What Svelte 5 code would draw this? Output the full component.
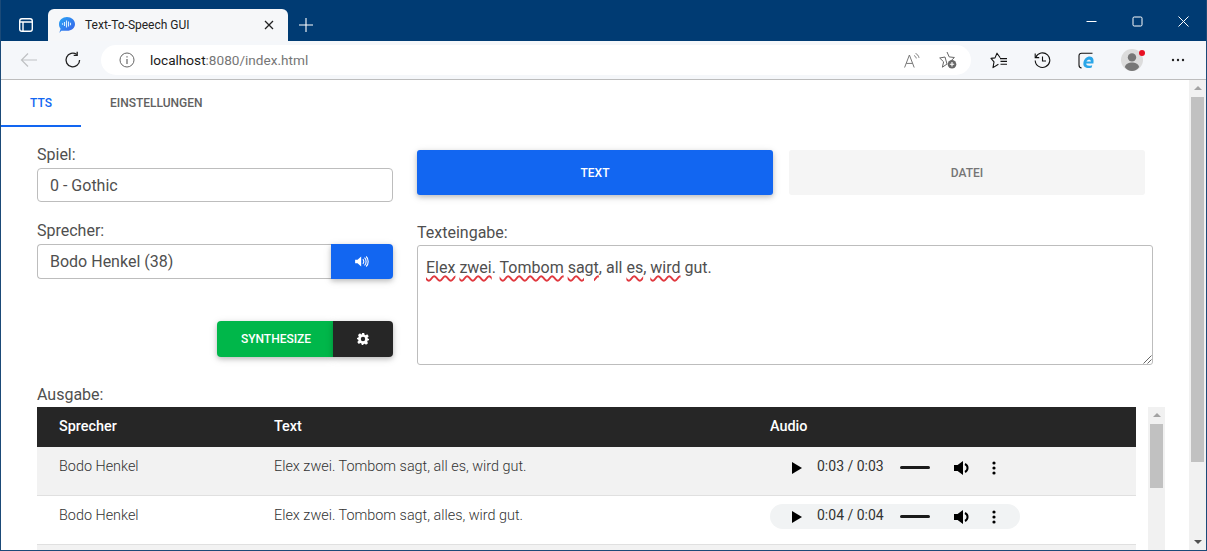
<script>
  // Browserfenster mit der TTS-Oberfläche
  const rows = [
    { who: "Bodo Henkel", text: "Elex zwei. Tombom sagt, all es, wird gut.", time: "0:03 / 0:03", hover: false },
    { who: "Bodo Henkel", text: "Elex zwei. Tombom sagt, alles, wird gut.", time: "0:04 / 0:04", hover: true },
  ];
</script>

<div class="window">
  <header class="titlebar">
    <div class="tabstrip-btn">
      <svg width="16" height="16" viewBox="0 0 16 16" fill="none" stroke="#fff" stroke-width="1.4"><rect x="1.7" y="1.7" width="12.6" height="12.6" rx="2.2"/><path d="M1.7 5H14.3M5 5V14.3"/></svg>
    </div>
    <div class="tab">
      <svg class="favicon" width="16" height="16" viewBox="0 0 16 16">
        <defs><linearGradient id="bubble" x1="0" y1="0" x2="1" y2="1"><stop offset="0" stop-color="#29a4f5"/><stop offset="1" stop-color="#3a5fe8"/></linearGradient></defs>
        <path d="M8 0C12.4 0 16 3 16 6.9S12.4 13.8 8 13.8H2.4C1.6 14.4 1 15.2 0.6 15.9 0.6 14.3 1.2 13 1.6 11.7 0.6 10.5 0 8.8 0 6.9 0 3 3.6 0 8 0Z" fill="url(#bubble)"/>
        <path d="M3.5 6.2V7.8M5.5 5V9M7.5 3.6V10.4M9.5 4.6V9.4M11.5 5.8V8.2" stroke="#d7ecff" stroke-width="1.1" fill="none"/>
      </svg>
      <span class="tab-title">Text-To-Speech GUI</span>
      <svg class="tab-x" width="10" height="10" viewBox="0 0 10 10" stroke="#222" stroke-width="1.3"><path d="M1 1L9 9M9 1L1 9"/></svg>
    </div>
    <svg class="plus" width="16" height="16" viewBox="0 0 16 16" stroke="#fff" stroke-width="1.1"><path d="M8 1V15M1 8H15"/></svg>
    <div class="winctl">
      <svg width="11" height="11" viewBox="0 0 11 11" stroke="#fff" stroke-width="1"><path d="M0.5 5.5H10.5"/></svg>
      <svg width="11" height="11" viewBox="0 0 11 11" stroke="#fff" fill="none" stroke-width="1"><rect x="1" y="1" width="9" height="9" rx="1.2"/></svg>
      <svg width="11" height="11" viewBox="0 0 11 11" stroke="#fff" stroke-width="1"><path d="M0.5 0.5L10.5 10.5M10.5 0.5L0.5 10.5"/></svg>
    </div>
  </header>

  <nav class="toolbar">
    <svg class="back" width="18" height="16" viewBox="0 0 18 16" fill="none" stroke="#bfc1c3" stroke-width="1.2"><path d="M17 8H1.5M8 1.5L1.5 8L8 14.5"/></svg>
    <svg class="reload" width="18" height="18" viewBox="0 0 18 18" fill="none" stroke="#222" stroke-width="1.3"><path d="M15.6 9A6.8 6.8 0 1 1 12.8 3.5"/><path d="M13.2 0.8V4.3H9.7"/></svg>
    <div class="omnibox">
      <svg width="16" height="16" viewBox="0 0 16 16" fill="none" stroke="#666" stroke-width="1"><circle cx="8" cy="8" r="7"/><path d="M8 7V12M8 4.2V5.6" stroke-width="1.2"/></svg>
      <span class="url"><span class="host">localhost</span>:8080/index.html</span>
      <span class="omni-icons">
        <svg width="16" height="15" viewBox="0 0 16 15" fill="none" stroke="#777" stroke-width="1"><path d="M0.6 14.5L5.4 2L10.2 14.5M2.2 10.4H8.6"/><path d="M10 2.6C11.2 3 12 4 12.3 5.4M11.6 0.6C13.4 1.2 14.6 2.8 15 4.8"/></svg>
        <svg width="18" height="18" viewBox="0 0 18 18" fill="none" stroke="#666" stroke-width="1"><path d="M8 1L10.2 5.9L15.4 6.5L11.8 10M8 13L3.4 16.2L4.6 10.8L0.7 7L6 6Z" stroke-linejoin="round"/><circle cx="13" cy="13.2" r="4.3" fill="#666" stroke="none"/><path d="M13 11V15.4M10.8 13.2H15.2" stroke="#fff" stroke-width="1.1"/></svg>
      </span>
    </div>
    <div class="tools">
      <svg class="t1" width="18" height="17" viewBox="0 0 18 17" fill="none" stroke="#111" stroke-width="1.1"><path d="M10.2 5.7L7 1.2L5 5.9L1 6.4L4 9.8L3 15.6L8.4 12.2" stroke-linejoin="round"/><path d="M10 6.6H17M10.5 9.4H17M10.5 12.2H17"/></svg>
      <svg class="t2" width="17" height="17" viewBox="0 0 17 17" fill="none" stroke="#111" stroke-width="1.1"><path d="M1.7 5.5A7.3 7.3 0 1 1 1.2 8.5"/><path d="M1.2 1.6V5.6H5.2M8.5 4.5V9H12"/></svg>
      <svg class="t3" width="17" height="17" viewBox="0 0 17 17" fill="none"><path d="M14.5 1.2H3.5A2.5 2.5 0 0 0 1 3.7V13A3 3 0 0 0 3.6 16" stroke="#111" stroke-width="1.1"/><path d="M15.4 11.6H8.2C8.2 13.9 11 14.4 14.2 13.2L13.7 15.4C9.5 16.8 4.8 15.6 5.4 10.9 5.9 7.2 8.6 4.6 11.8 4.6 15 4.6 16.2 7.6 15.4 11.6ZM8.5 9.6H12.9C13 7.2 9.4 7.2 8.5 9.6Z" fill="#2aa6e8"/></svg>
      <span class="avatar">
        <svg width="22" height="22" viewBox="0 0 22 22"><circle cx="11" cy="11" r="11" fill="#dcdcdc"/><circle cx="11" cy="8.4" r="4.2" fill="#777"/><path d="M3.8 18C5 14.6 8 13.6 11 13.6S17 14.6 18.2 18C16.4 20.6 13.8 22 11 22S5.6 20.6 3.8 18Z" fill="#777"/></svg>
        <i class="dot"></i>
      </span>
      <svg class="t4" width="14" height="4" viewBox="0 0 14 4" fill="#222"><circle cx="2" cy="2" r="1.2"/><circle cx="7" cy="2" r="1.2"/><circle cx="12" cy="2" r="1.2"/></svg>
    </div>
  </nav>

  <div class="viewport">
    <main class="page">
      <div class="tabs">
        <div class="tabitem active">TTS</div>
        <div class="tabitem">Einstellungen</div>
      </div>

      <section class="form">
        <div class="left">
          <label class="lbl" for="spiel">Spiel:</label>
          <div class="field" id="spiel">0 - Gothic</div>

          <label class="lbl second" for="sprecher">Sprecher:</label>
          <div class="joined">
            <div class="field grow" id="sprecher">Bodo Henkel (38)</div>
            <button class="btn speak" aria-label="Anhören">
              <svg width="14" height="11" viewBox="0 0 15 12" fill="#fff"><path d="M0 4H2.6L6.6 0.6V11.4L2.6 8H0Z"/><path d="M8.4 3.5C9.8 4.6 9.8 7.4 8.4 8.5M10.2 1.8C12.6 3.6 12.6 8.4 10.2 10.2M12 0.5C15 3 15 9 12 11.5" stroke="#fff" stroke-width="1.2" fill="none"/></svg>
            </button>
          </div>

          <div class="actions">
            <button class="btn synth">Synthesize</button>
            <button class="btn gear" aria-label="Einstellungen">
              <svg width="12" height="12" viewBox="0 0 24 24" fill="#fff"><path fill-rule="evenodd" d="M9.6 0H14.4L15.2 3.4 17.4 4.3 20.4 2.5 23.5 6.6 21 9 21.5 11 24 12.2V14.4L21.3 15.2 20.5 17.4 22 20.4 18 23.5 15.6 21.4 13.6 22 12 24H9.6L8.8 21 6.6 20.1 3.6 21.9 0.5 17.8 3 15.4 2.5 13.4 0 12.2V9.8L2.7 9 3.5 6.8 2 3.8 6 0.7 8.4 2.8 10.4 2.2ZM12 7.6A4.4 4.4 0 1 0 12 16.4 4.4 4.4 0 1 0 12 7.6Z"/></svg>
            </button>
          </div>
        </div>

        <div class="right">
          <div class="modes">
            <button class="btn mode on">Text</button>
            <button class="btn mode">Datei</button>
          </div>
          <label class="lbl" for="eingabe">Texteingabe:</label>
          <div class="textarea" id="eingabe">
            <span class="typo">Elex</span> <span class="typo">zwei</span>. <span class="typo">Tombom</span> <span class="typo">sagt</span>, all <span class="typo">es</span>, <span class="typo">wird</span> gut.
            <svg class="grip" width="10" height="10" viewBox="0 0 10 10" stroke="#666" stroke-width="1"><path d="M9.5 1.5L1.5 9.5M9.5 5.5L5.5 9.5"/></svg>
          </div>
        </div>
      </section>

      <div class="output">
        <div class="lbl">Ausgabe:</div>
        <div class="table-wrap">
          <div class="table">
            <div class="row head">
              <div class="c1">Sprecher</div>
              <div class="c2">Text</div>
              <div class="c3">Audio</div>
            </div>
            {#each rows as r, i}
              <div class="row" class:odd={i === 0}>
                <div class="c1">{r.who}</div>
                <div class="c2">{r.text}</div>
                <div class="c3">
                  <div class="player" class:tinted={r.hover}>
                    <svg class="play" width="10" height="12" viewBox="0 0 10 12"><path d="M0 0L10 6L0 12Z" fill="#000"/></svg>
                    <span class="time">{r.time}</span>
                    <i class="track"></i>
                    <svg class="vol" width="16" height="14" viewBox="0 0 16 14"><path d="M0 4H3.6L9 0V14L3.6 10H0Z" fill="#000"/><path d="M11 3C14.4 4.8 14.4 9.2 11 11" stroke="#000" stroke-width="2" fill="none"/></svg>
                    <svg class="more" width="4" height="14" viewBox="0 0 4 14" fill="#000"><circle cx="2" cy="2" r="1.6"/><circle cx="2" cy="7" r="1.6"/><circle cx="2" cy="12" r="1.6"/></svg>
                  </div>
                </div>
              </div>
            {/each}
            <div class="row odd stub"></div>
          </div>
          <div class="scrollbar inner">
            <i class="arrow up"></i>
            <i class="thumb"></i>
          </div>
        </div>
      </div>
    </main>
    <div class="scrollbar outer">
      <i class="arrow up"></i>
      <i class="thumb"></i>
      <i class="arrow down"></i>
    </div>
  </div>
</div>

<style>
  :global(body) {
    margin: 0;
    overflow: hidden;
  }
  .window {
    width: 1207px;
    height: 551px;
    box-sizing: border-box;
    display: flex;
    flex-direction: column;
    border: 1px solid #1b4a78;
    border-top: 0;
    font-family: Roboto, "Liberation Sans", sans-serif;
    color: #4f4f4f;
    overflow: hidden;
    background: #fff;
  }
  .titlebar {
    flex: 0 0 41px;
    display: flex;
    align-items: flex-end;
    background: #003b73;
    color: #fff;
  }
  .tabstrip-btn {
    width: 47px;
    height: 32px;
    display: flex;
    align-items: center;
    justify-content: center;
    box-sizing: border-box;
    padding-left: 2px;
  }
  .tab {
    width: 240px;
    height: 32px;
    background: #f6f7f9;
    border-radius: 6px 6px 0 0;
    display: flex;
    align-items: center;
    padding: 0 11px;
    box-sizing: border-box;
    gap: 10px;
  }
  .favicon {
    flex: none;
  }
  .tab-title {
    flex: 1;
    font-size: 12px;
    color: #222;
  }
  .tab-x {
    margin-right: 3px;
  }
  .plus {
    margin: 0 0 8px 10px;
  }
  .winctl {
    margin-left: auto;
    display: flex;
    gap: 35px;
    padding-right: 17px;
    align-self: center;
    margin-top: 1px;
  }
  .toolbar {
    flex: 0 0 39px;
    box-sizing: border-box;
    background: #f5f7fa;
    border-bottom: 1px solid #bdbdbd;
    display: flex;
    align-items: center;
  }
  .back {
    margin-left: 19px;
  }
  .reload {
    margin-left: 26px;
  }
  .omnibox {
    margin-left: 19px;
    width: 870px;
    height: 30px;
    border-radius: 15px;
    background: #fff;
    display: flex;
    align-items: center;
    padding: 0 14px 0 18px;
    box-sizing: border-box;
    gap: 15px;
  }
  .url {
    font-size: 13.6px;
    color: #767676;
  }
  .host {
    color: #1a1a1a;
  }
  .omni-icons {
    margin-left: auto;
    display: flex;
    align-items: center;
    gap: 19px;
  }
  .tools {
    display: flex;
    align-items: center;
    margin-left: 19px;
  }
  .t2 {
    margin-left: 26px;
  }
  .t3 {
    margin-left: 27px;
  }
  .avatar {
    position: relative;
    margin-left: 26px;
    width: 22px;
    height: 22px;
  }
  .dot {
    position: absolute;
    right: -2px;
    top: 1px;
    width: 6px;
    height: 6px;
    border-radius: 50%;
    background: #e81123;
  }
  .t4 {
    margin-left: 28px;
  }
  .viewport {
    flex: 1;
    min-height: 0;
    display: flex;
  }
  .page {
    flex: 1;
    min-width: 0;
    overflow: hidden;
  }
  .tabs {
    display: flex;
    height: 47px;
  }
  .tabitem {
    padding: 0 29px;
    font-size: 12px;
    font-weight: 500;
    line-height: 46px;
    text-transform: uppercase;
    color: #616161;
    box-sizing: border-box;
  }
  .tabitem.active {
    width: 80px;
    text-align: center;
    padding: 0;
    color: #1266f1;
    border-bottom: 2px solid #1266f1;
  }
  .form {
    display: flex;
    gap: 24px;
    padding: 23px 0 0 36px;
  }
  .left {
    width: 356px;
    display: flex;
    flex-direction: column;
    margin-top: -5px;
  }
  .lbl {
    display: block;
    font-size: 16px;
    line-height: 19px;
    color: #4f4f4f;
    margin-bottom: 4px;
  }
  .second {
    margin-top: 19px;
  }
  .field {
    height: 34px;
    box-sizing: border-box;
    border: 1px solid #bdbdbd;
    border-radius: 4px;
    padding: 0 12px;
    font-size: 16px;
    line-height: 33px;
    color: #4f4f4f;
  }
  .joined {
    display: flex;
  }
  .grow {
    flex: 1;
    height: 35px;
    line-height: 33px;
    border-radius: 4px 0 0 4px;
    border-right: 0;
  }
  .btn {
    border: 0;
    padding: 0;
    font-family: inherit;
    font-size: 12px;
    font-weight: 500;
    text-transform: uppercase;
    cursor: pointer;
    display: flex;
    align-items: center;
    justify-content: center;
    box-shadow: 0 2px 5px rgba(0, 0, 0, 0.2), 0 2px 10px rgba(0, 0, 0, 0.1);
  }
  .speak {
    width: 62px;
    height: 35px;
    background: #1266f1;
    border-radius: 0 4px 4px 0;
  }
  .actions {
    display: flex;
    justify-content: flex-end;
    margin-top: 42px;
  }
  .synth {
    width: 116px;
    height: 36px;
    padding-left: 2px;
    background: #00b74a;
    color: #fff;
    border-radius: 4px 0 0 4px;
  }
  .gear {
    width: 60px;
    height: 36px;
    background: #262626;
    border-radius: 0 4px 4px 0;
  }
  .right {
    width: 736px;
    display: flex;
    flex-direction: column;
  }
  .right .lbl {
    margin-bottom: 3px;
  }
  .modes {
    display: flex;
    gap: 16px;
    width: 728px;
    margin-bottom: 28px;
  }
  .mode {
    flex: 1;
    height: 45px;
    background: #f5f5f5;
    color: #757575;
    border-radius: 3px;
    box-shadow: none;
  }
  .mode.on {
    background: #1266f1;
    color: #fff;
    box-shadow: 0 2px 5px rgba(0, 0, 0, 0.2), 0 2px 10px rgba(0, 0, 0, 0.1);
  }
  .textarea {
    position: relative;
    height: 120px;
    box-sizing: border-box;
    border: 1px solid #bdbdbd;
    border-radius: 3px;
    padding: 12px 8px;
    font-size: 16px;
    line-height: 20px;
    color: #4f4f4f;
  }
  .typo {
    text-decoration: underline wavy #e0383e 1.7px;
    text-underline-offset: 2px;
  }
  .grip {
    position: absolute;
    right: 0;
    bottom: 0;
  }
  .output {
    padding: 20px 0 0 36px;
  }
  .output .lbl {
    margin-bottom: 3px;
  }
  .table-wrap {
    display: flex;
    gap: 12px;
  }
  .table {
    width: 1099px;
    flex: none;
  }
  .row {
    display: flex;
    height: 49px;
    box-sizing: border-box;
    padding-top: 11px;
    border-bottom: 1px solid #e0e0e0;
    font-size: 14.4px;
    font-weight: 300;
    line-height: 17px;
    color: #333;
  }
  .row.odd {
    background: #f2f2f2;
  }
  .head {
    height: 40px;
    background: #262626;
    color: #fff;
    font-weight: 500;
    border-bottom: 0;
    align-items: center;
    padding: 0 0 1px;
  }
  .stub {
    height: 20px;
    border: 0;
    padding: 0;
  }
  .c1 {
    width: 214px;
    padding-left: 22px;
    box-sizing: border-box;
  }
  .c2 {
    width: 496px;
    padding-left: 23px;
    box-sizing: border-box;
  }
  .c3 {
    flex: 1;
    padding-left: 23px;
    box-sizing: border-box;
  }
  .row:not(.head) .c3 {
    margin-top: -3px;
  }
  .player {
    width: 250px;
    height: 25px;
    border-radius: 13px;
    display: flex;
    align-items: center;
    box-sizing: border-box;
    padding-left: 22px;
    color: #333;
    font-weight: 400;
  }
  .player.tinted {
    background: #f1f3f4;
  }
  .time {
    margin-left: 15px;
    font-size: 14px;
    position: relative;
    top: -1px;
  }
  .track {
    width: 30px;
    height: 3px;
    border-radius: 2px;
    background: #1a1a1a;
    margin-left: 16px;
  }
  .vol {
    margin-left: 24px;
  }
  .more {
    margin-left: 22px;
  }
  .scrollbar {
    flex: none;
    width: 17px;
    background: #f1f1f1;
    position: relative;
    display: flex;
    flex-direction: column;
    align-items: center;
  }
  .inner {
    height: 144px;
  }
  .arrow {
    flex: none;
    width: 0;
    height: 0;
    border-left: 4px solid transparent;
    border-right: 4px solid transparent;
  }
  .arrow.up {
    border-bottom: 4px solid #a3a3a3;
    margin: 6px 0 7px;
  }
  .arrow.down {
    border-top: 4px solid #505050;
    margin: auto 0 6px;
  }
  .thumb {
    width: 13px;
    background: #c1c1c1;
    flex: none;
  }
  .inner .thumb {
    height: 64px;
  }
  .outer .thumb {
    height: 365px;
  }
</style>
